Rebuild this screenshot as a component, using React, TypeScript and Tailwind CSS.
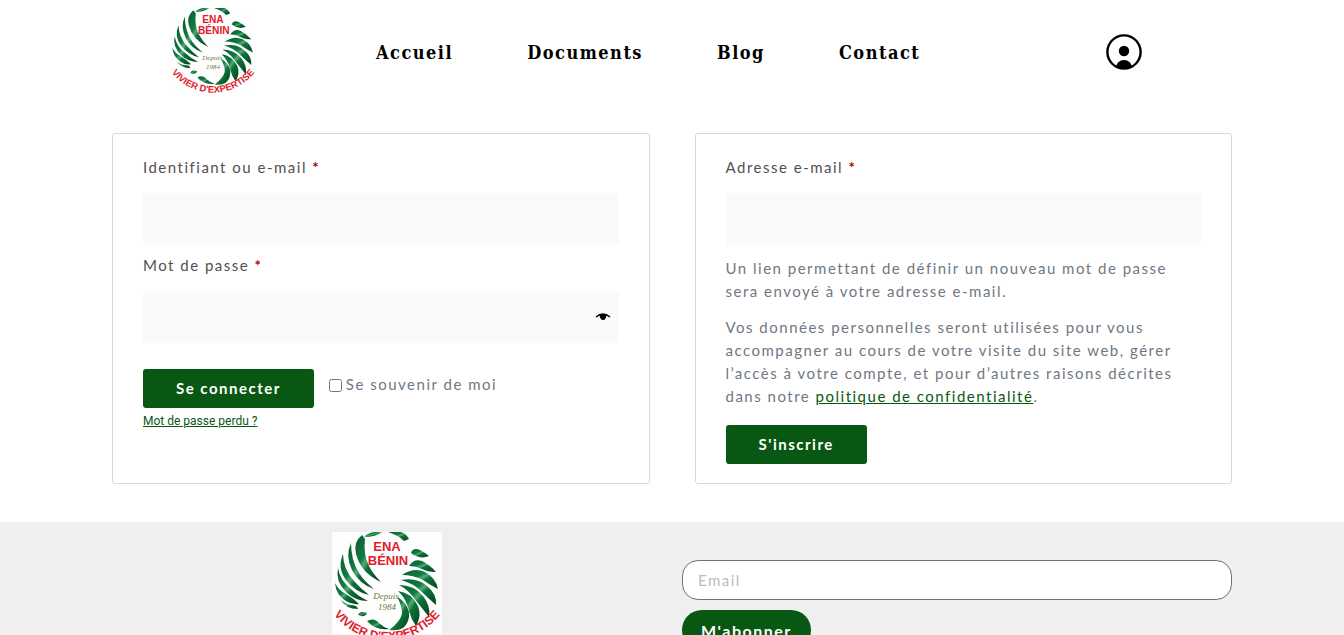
import { useState } from 'react';
import type { ReactNode } from 'react';

const navItems = ['Accueil', 'Documents', 'Blog', 'Contact'];

// Feathers of the emblem, left wing then right wing
const feathers = [
  'M32 5 Q37 0 44 0 H50 Q44 5 32 5Z',
  'M56 0 H68 Q73 0 77 7 L72 9 Q66 3 56 0Z',
  'M30 3 Q21 10 24 22 Q29 41 49 50 Q41 42 37 34 Q31 22 33 7Z',
  'M19 11 Q13 24 20 38 Q27 52 42 57 Q32 49 27 41 Q19 28 19 11Z',
  'M11 22 Q5 36 14 48 Q23 60 37 63 Q28 56 22 49 Q11 37 11 22Z',
  'M6 36 Q3 49 14 60 Q23 69 36 69 Q26 64 20 58 Q8 49 6 36Z',
  'M3 51 Q4 63 14 69 Q20 73 27 72 Q21 66 14 62 Q6 58 3 51Z',
  'M8 67 Q14 77 26 77 Q25 73 19 73 Q12 72 8 67Z',
  'M26 83 Q28 78 35 81 Q33 86 26 83Z',
  'M35 89 Q42 85 47 91 Q51 95 57 97 Q44 99 35 89Z',
  'M79 21 Q81 15 88 18 Q92 20 97 24 Q88 28 79 21Z',
  'M77 34 Q82 26 90 29 Q98 33 104 40 Q95 40 90 37 Q84 34 77 34Z',
  'M70 43 Q82 35 93 40 Q104 46 106 57 Q98 53 91 48 Q81 43 70 43Z',
  'M69 48 Q85 45 95 54 Q105 62 104 73 Q96 66 90 60 Q81 51 69 48Z',
  'M67 53 Q82 53 91 64 Q99 74 97 85 Q90 76 85 70 Q77 58 67 53Z',
  'M66 59 Q80 61 86 74 Q90 84 84 94 Q79 87 77 79 Q74 66 66 59Z',
  'M65 65 Q74 69 77 80 Q78 90 71 96 Q66 99 57 98 Q68 90 70 82 Q70 73 65 65Z',
];

function Logo({ id, className }: { id: string; className: string }) {
  return (
    <svg viewBox="0 0 110 110" className={className} role="img" aria-label="ENA Bénin">
      <defs>
        <linearGradient id={`${id}-green`} x1="0" y1="0" x2="1" y2="1">
          <stop offset="0" stopColor="#0d5a30" />
          <stop offset="0.38" stopColor="#0f7c40" />
          <stop offset="0.48" stopColor="#58a877" />
          <stop offset="0.58" stopColor="#0c7339" />
          <stop offset="1" stopColor="#05401f" />
        </linearGradient>
        <path id={`${id}-arc`} d="M-4 74 A68 68 0 0 0 114 74" />
      </defs>
      <rect width="110" height="110" fill="#fefefe" />
      {feathers.map((d) => (
        <path key={d} d={d} fill={`url(#${id}-green)`} />
      ))}
      <g fontFamily="Liberation Sans, sans-serif" fontWeight="700" fill="#e0202b" textAnchor="middle" letterSpacing="0">
        <text x="55" y="19" fontSize="13">ENA</text>
        <text x="56" y="33" fontSize="13">BÉNIN</text>
        <text fontSize="12">
          <textPath href={`#${id}-arc`} startOffset="50%">VIVIER D'EXPERTISE</textPath>
        </text>
      </g>
      <g fontFamily="Liberation Serif, serif" fontStyle="italic" fill="#5f7f3c" textAnchor="middle" letterSpacing="0">
        <text x="54" y="67" fontSize="9">Depuis</text>
        <text x="55" y="78" fontSize="9">1984</text>
      </g>
    </svg>
  );
}

function UserIcon() {
  return (
    <svg viewBox="0 0 36 36" className="size-9">
      <defs>
        <clipPath id="user-clip">
          <circle cx="18" cy="18" r="17" />
        </clipPath>
      </defs>
      <circle cx="18" cy="18" r="16.6" fill="none" stroke="#000" strokeWidth="2.4" />
      <circle cx="18" cy="17" r="5.2" />
      <ellipse cx="18" cy="34" rx="8" ry="8" clipPath="url(#user-clip)" />
    </svg>
  );
}

function Label({ htmlFor, children }: { htmlFor: string; children: ReactNode }) {
  return (
    <label htmlFor={htmlFor} className="mb-[14px] block text-[#515151]">
      {children} <span className="font-bold text-[#a00]">*</span>
    </label>
  );
}

const cardClass = 'rounded-[3px] border border-[#d5d8dc] px-[30px] pt-[22px] pb-[19px]';
const fieldClass = 'block h-13 w-full bg-[#f9fafa] px-4 text-[#515151] outline-none';
const buttonClass = 'h-[39px] rounded-[3px] bg-[#085712] px-[33px] font-bold text-white';

export default function App() {
  const [showPassword, setShowPassword] = useState(false);

  return (
    <div className="bg-white font-[Lato,sans-serif] text-[15px] leading-[23px] tracking-[1.5px] text-[#6f7883]">
      <header className="mx-auto flex max-w-[1120px] items-center px-[58px] pt-2 pb-[37px]">
        <a href="#" className="shrink-0 pb-[2px]">
          <Logo id="header" className="size-[86px]" />
        </a>
        <nav className="ml-[120px] flex gap-[74px] font-['DejaVu_Serif_Condensed','DejaVu_Serif',serif] text-[18px] font-bold text-black">
          {navItems.map((item) => (
            <a key={item} href="#">{item}</a>
          ))}
        </nav>
        <a href="#" aria-label="Mon compte" className="mr-8 ml-auto">
          <UserIcon />
        </a>
      </header>

      <main className="mx-auto grid max-w-[1120px] grid-cols-2 gap-[45px] pb-[38px]">
        <form className={cardClass}>
          <Label htmlFor="username">Identifiant ou e-mail</Label>
          <input id="username" type="text" className={fieldClass} />
          <div className="mt-[9px]">
            <Label htmlFor="password">Mot de passe</Label>
            <div className="relative">
              <input id="password" type={showPassword ? 'text' : 'password'} className={fieldClass} />
              <button
                type="button"
                aria-label="Afficher le mot de passe"
                onClick={() => setShowPassword(!showPassword)}
                className="absolute top-1/2 right-2 -translate-y-1/2"
              >
                <svg viewBox="0 0 16 8" className="h-2 w-4">
                  <path d="M1 4 Q8 -2 15 4" fill="none" stroke="#000" strokeWidth="1.3" />
                  <path d="M4.5 2 Q8 0 11.5 2 Q11 7 8 7 Q5 7 4.5 2Z" />
                </svg>
              </button>
            </div>
          </div>
          <div className="mt-[26px] flex items-center gap-[15px]">
            <button type="button" className={buttonClass}>Se connecter</button>
            <label className="mb-2 flex items-center gap-1">
              <input type="checkbox" className="mt-[2px] size-[13px]" />
              Se souvenir de moi
            </label>
          </div>
          <a href="#" className="mt-1 inline-block font-[Roboto,sans-serif] text-[12px] leading-[18px] tracking-normal text-[#085712] underline">
            Mot de passe perdu ?
          </a>
        </form>

        <form className={cardClass}>
          <Label htmlFor="reg-email">Adresse e-mail</Label>
          <input id="reg-email" type="email" className={fieldClass} />
          <p className="mt-3 mb-[13px]">
            Un lien permettant de définir un nouveau mot de passe sera envoyé à votre adresse e-mail.
          </p>
          <p className="mb-[17px]">
            Vos données personnelles seront utilisées pour vous accompagner au cours de votre visite du
            site web, gérer l’accès à votre compte, et pour d’autres raisons décrites dans notre{' '}
            <a href="#" className="text-[#085712] underline">politique de confidentialité</a>.
          </p>
          <button type="button" className={buttonClass}>S'inscrire</button>
        </form>
      </main>

      <footer className="bg-[#efefef] pt-[10px] pb-10">
        <div className="mx-auto grid max-w-[1120px] grid-cols-2 gap-5">
          <Logo id="footer" className="size-[110px] justify-self-center" />
          <form className="pt-7">
            <input
              type="email"
              aria-label="Email"
              placeholder="Email"
              className="block h-10 w-full rounded-[16px] border border-[#69727d] bg-white px-[15px] outline-none placeholder:text-[#bbbbbb]"
            />
            <button type="button" className="mt-[10px] h-10 rounded-[20px] bg-[#085712] px-[19px] text-[16px] font-bold text-white">
              M'abonner
            </button>
          </form>
        </div>
      </footer>
    </div>
  );
}
